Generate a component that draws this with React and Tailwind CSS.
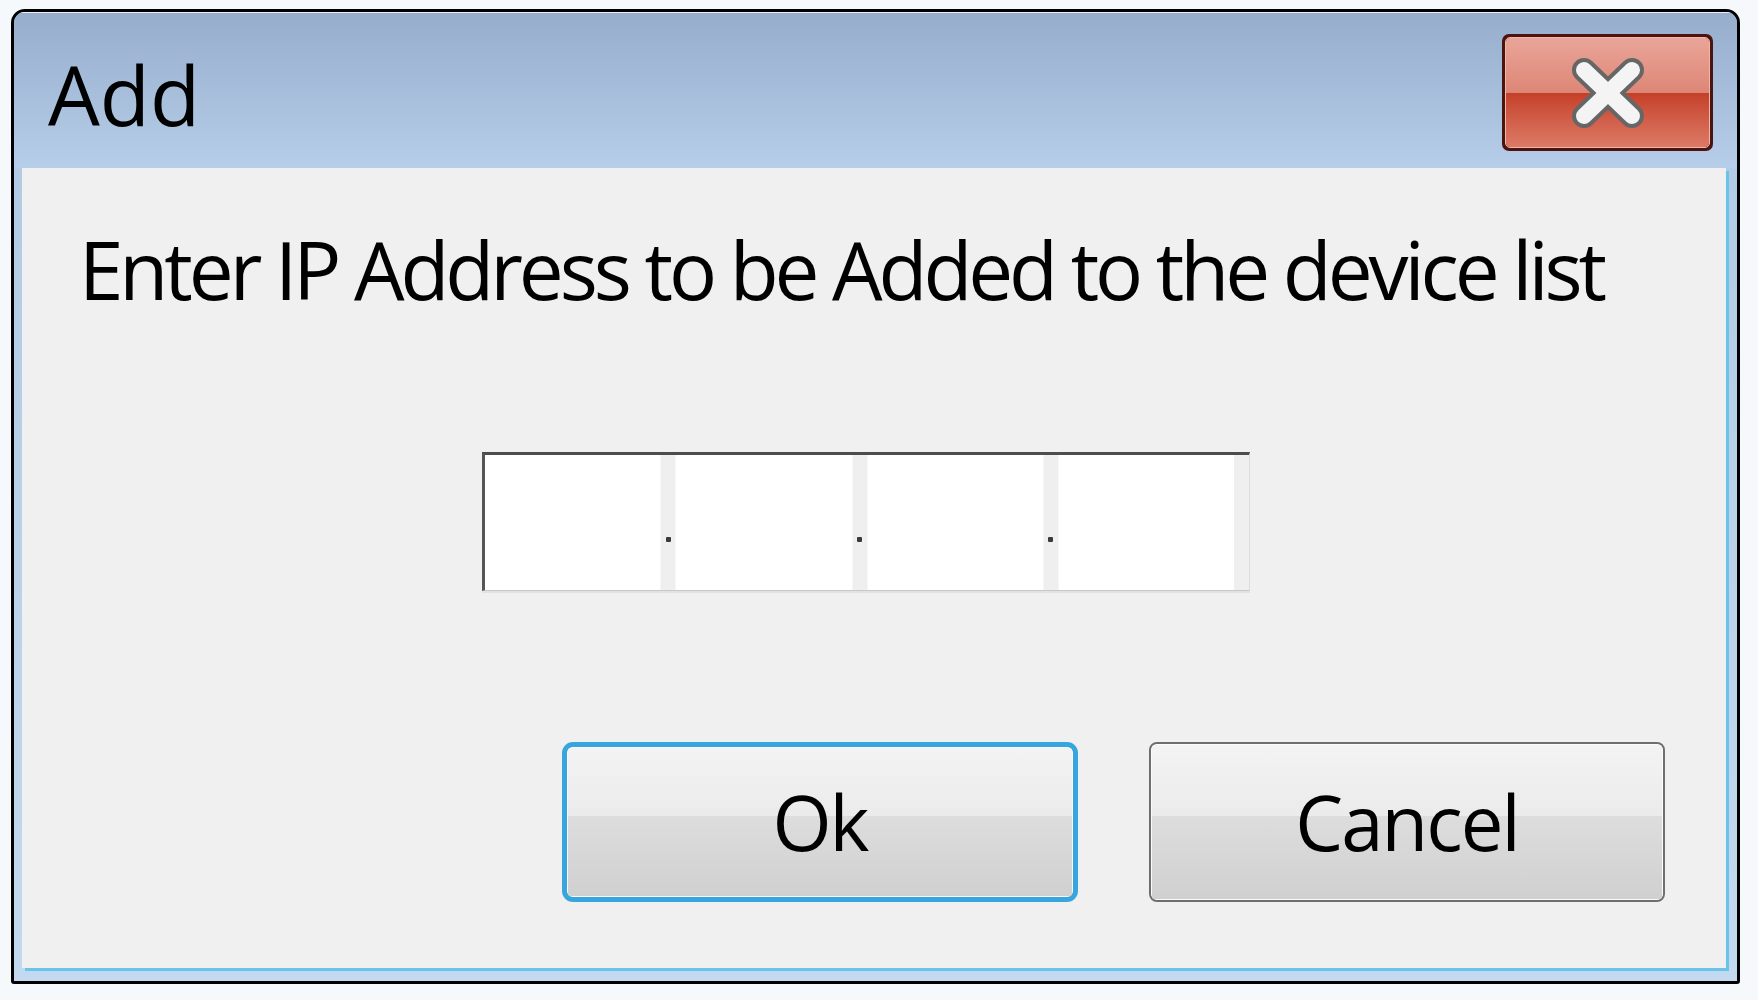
import React from 'react';

const FONT = { fontFamily: '"Open Sans", "Noto Sans", "Liberation Sans", sans-serif' };

// one octet box of the IP control
const Octet = () => <div className="flex-1 bg-white" />;

const Dot = () => (
  <div className="w-[16px] bg-[#efefef] border-x border-[#f7f7f7] flex justify-center">
    <div className="mt-[82px] w-[5px] h-[5px] rounded-[1px] bg-[#3a3a3a]" />
  </div>
);

const CloseButton = () => (
  <div className="w-[211px] h-[117px] rounded-[7px] border-[2px] border-[#4a1410] p-[1px] bg-[#4a1410]">
    <div className="relative w-full h-full rounded-[5px] border border-[#f3b7a8] overflow-hidden flex flex-col">
      <div className="h-1/2 bg-gradient-to-b from-[#e9a598] to-[#dd8676]" />
      <div className="h-1/2 bg-gradient-to-b from-[#c53f28] to-[#dc7a66]" />
      <svg className="absolute left-1/2 top-1/2 -translate-x-1/2 -translate-y-1/2" width="76" height="70" viewBox="0 0 76 70">
        <g strokeLinecap="round">
          <line x1="14" y1="12" x2="62" y2="58" stroke="#666" strokeWidth="24" />
          <line x1="62" y1="12" x2="14" y2="58" stroke="#666" strokeWidth="24" />
          <line x1="14" y1="12" x2="62" y2="58" stroke="#f4f4f4" strokeWidth="16" />
          <line x1="62" y1="12" x2="14" y2="58" stroke="#f4f4f4" strokeWidth="16" />
        </g>
      </svg>
    </div>
  </div>
);

const DialogButton = ({ label, primary }) => (
  <button
    className={`w-[516px] h-[160px] flex flex-col overflow-hidden ${
      primary
        ? 'rounded-[11px] border-[5px] border-[#38a6de]'
        : 'rounded-[8px] border-[2px] border-[#6e6e6e]'
    }`}
  >
    <div className="relative w-full h-full border border-white/80 rounded-[6px] flex flex-col">
      <div className="h-[46%] bg-gradient-to-b from-[#f3f3f3] to-[#ebebeb]" />
      <div className="flex-1 bg-gradient-to-b from-[#dddddd] to-[#d0d0d0]" />
      <span className="absolute inset-0 flex items-center justify-center text-[76px] leading-none tracking-[-0.025em] text-black">
        {label}
      </span>
    </div>
  </button>
);

export default function App() {
  return (
    <div className="w-[1758px] h-[1000px] bg-[#f6f9fc] pt-[9px] pl-[11px]" style={FONT}>
      <div className="w-[1729px] h-[975px] rounded-t-[14px] rounded-b-[3px] border-[3px] border-black bg-gradient-to-b from-[#b0c8e4] to-[#c3d9ef] flex flex-col overflow-hidden">
        {/* title bar */}
        <div className="h-[156px] shrink-0 flex border-t border-white/70 bg-gradient-to-b from-[#96aecc] to-[#b6cee9]">
          <div className="pl-[34px] pt-[40px] text-[82px] leading-none text-black">Add</div>
          <div className="ml-auto mr-[24px] mt-[21px]">
            <CloseButton />
          </div>
        </div>

        {/* client area */}
        <div className="flex-1 ml-[8px] mr-[11px] mb-[13px] bg-[#f0f0f0] flex flex-col shadow-[3px_3px_0_#69c4ea]">
          <div className="pt-[61px] pl-[57px] text-[80px] leading-none tracking-[-0.051em] text-black whitespace-nowrap">
            Enter IP Address to be Added to the device list
          </div>

          <div className="mt-[143px] ml-[460px] w-[768px] h-[139px] flex border-t-[3px] border-l-[3px] border-t-[#4d4d4d] border-l-[#555] border-r border-b border-r-[#dcdcdc] border-b-[#c8c8c8] shadow-[0_2px_0_#e2e2e2]">
            <Octet />
            <Dot />
            <Octet />
            <Dot />
            <Octet />
            <Dot />
            <Octet />
            <div className="w-[15px] bg-[#efefef]" />
          </div>

          <div className="mt-[151px] ml-[540px] flex gap-[71px]">
            <DialogButton label="Ok" primary />
            <DialogButton label="Cancel" />
          </div>
        </div>
      </div>
    </div>
  );
}
